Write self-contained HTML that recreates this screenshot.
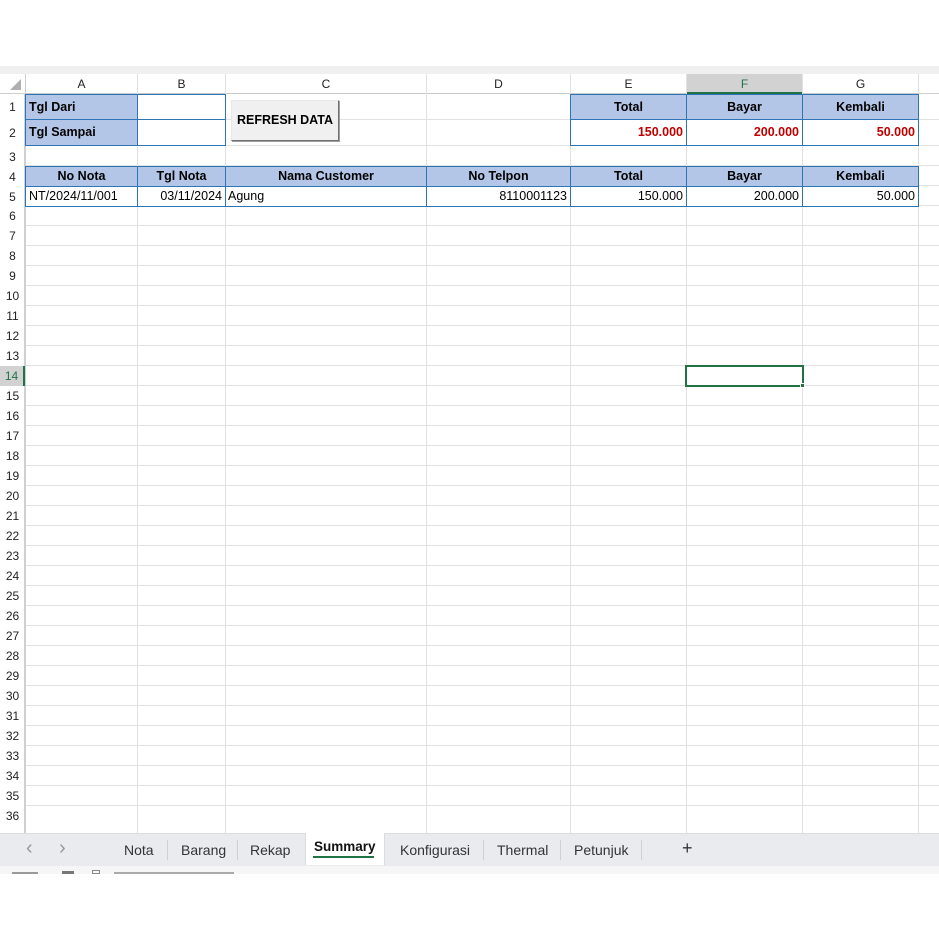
<!DOCTYPE html>
<html><head><meta charset="utf-8"><style>
*{margin:0;padding:0;box-sizing:border-box}
body{width:939px;height:939px;background:#fff;position:relative;overflow:hidden;font-family:"Liberation Sans",Arial,sans-serif;font-size:12.5px;color:#000}
.a{position:absolute}
.vl{position:absolute;top:74px;height:759px;width:1px;background:#e1e1e1}
.hdr{position:absolute;top:74px;height:20px;background:#fff;border-bottom:1px solid #c8c8c8;text-align:center;line-height:20px;color:#222;font-size:12px}
.rn{position:absolute;left:0;width:25px;text-align:center;color:#222;font-size:12px;line-height:20px}
.c{position:absolute;line-height:19px;white-space:nowrap;overflow:hidden;padding:0 3px}
.h{background:#b4c6e7;font-weight:bold;text-align:center;border:1px solid #2e75b6}
.b{border:1px solid #2e75b6}
.r{text-align:right}
.red{color:#c00000;font-weight:bold}
.tab{position:absolute;top:842px;font-size:14px;color:#333}
.sep{position:absolute;top:840px;width:1px;height:20px;background:#d0d0d0}
</style></head><body>
<div class="a" style="left:0;top:66px;width:939px;height:8px;background:#f0f0f0"></div>
<div class="a" style="left:0;top:74px;width:939px;height:20px;background:#fff;border-bottom:1px solid #d0d0d0"></div>
<div class="a" style="left:0;top:94px;width:25px;height:739px;background:#fff;border-right:1px solid #d0d0d0"></div>
<div class="a" style="left:26px;top:94px;width:913px;height:739px;background:repeating-linear-gradient(to bottom,#fff 0,#fff 19px,#e1e1e1 19px,#e1e1e1 20px);background-position:0 -8px"></div>
<div class="a" style="left:26px;top:94px;width:913px;height:72px;background:#fff"></div>
<div class="a" style="left:26px;top:119px;width:913px;height:1px;background:#e1e1e1"></div>
<div class="a" style="left:26px;top:145px;width:913px;height:1px;background:#e1e1e1"></div>
<div class="a" style="left:26px;top:165px;width:913px;height:1px;background:#e1e1e1"></div>
<div class="vl" style="left:25px;background:#d0d0d0"></div>
<div class="vl" style="left:137px"></div><div class="vl" style="left:225px"></div><div class="vl" style="left:426px"></div><div class="vl" style="left:570px"></div><div class="vl" style="left:686px"></div><div class="vl" style="left:802px"></div><div class="vl" style="left:918px"></div>
<svg class="a" style="left:8px;top:79px" width="14" height="12"><polygon points="13,0 13,11 2,11" fill="#b0b0b0"/></svg>
<div class="hdr" style="left:26px;width:111px">A</div>
<div class="hdr" style="left:138px;width:87px">B</div>
<div class="hdr" style="left:226px;width:200px">C</div>
<div class="hdr" style="left:427px;width:143px">D</div>
<div class="hdr" style="left:571px;width:115px">E</div>
<div class="hdr" style="left:687px;width:115px;background:#d2d2d2;border-bottom:2px solid #217346;color:#217346">F</div>
<div class="hdr" style="left:803px;width:115px">G</div>
<div class="rn" style="top:97px">1</div><div class="rn" style="top:123px">2</div><div class="rn" style="top:147px">3</div><div class="rn" style="top:167px">4</div><div class="rn" style="top:187px">5</div>
<div class="rn" style="top:206px">6</div><div class="rn" style="top:226px">7</div><div class="rn" style="top:246px">8</div><div class="rn" style="top:266px">9</div><div class="rn" style="top:286px">10</div><div class="rn" style="top:306px">11</div><div class="rn" style="top:326px">12</div><div class="rn" style="top:346px">13</div>
<div class="rn" style="top:366px;height:20px;background:#d2d2d2;color:#217346;border-right:2px solid #217346">14</div>
<div class="rn" style="top:386px">15</div><div class="rn" style="top:406px">16</div><div class="rn" style="top:426px">17</div><div class="rn" style="top:446px">18</div><div class="rn" style="top:466px">19</div><div class="rn" style="top:486px">20</div><div class="rn" style="top:506px">21</div><div class="rn" style="top:526px">22</div><div class="rn" style="top:546px">23</div><div class="rn" style="top:566px">24</div><div class="rn" style="top:586px">25</div><div class="rn" style="top:606px">26</div><div class="rn" style="top:626px">27</div><div class="rn" style="top:646px">28</div><div class="rn" style="top:666px">29</div><div class="rn" style="top:686px">30</div><div class="rn" style="top:706px">31</div><div class="rn" style="top:726px">32</div><div class="rn" style="top:746px">33</div><div class="rn" style="top:766px">34</div><div class="rn" style="top:786px">35</div><div class="rn" style="top:806px">36</div>
<div class="c h" style="left:25px;top:94px;width:113px;height:26px;line-height:24px;text-align:left">Tgl Dari</div>
<div class="c h" style="left:25px;top:119px;width:113px;height:27px;line-height:25px;text-align:left">Tgl Sampai</div>
<div class="c b" style="left:137px;top:94px;width:89px;height:26px"></div>
<div class="c b" style="left:137px;top:119px;width:89px;height:27px"></div>
<div class="a" style="left:231px;top:100px;width:108px;height:41px;background:#f0f0f0;border:1px solid;border-color:#e8e8e8 #707070 #707070 #e8e8e8;box-shadow:1px 1px 0 #a0a0a0;font-weight:bold;font-size:12.5px;text-align:center;line-height:39px">REFRESH DATA</div>
<div class="c h" style="left:570px;top:94px;width:117px;height:26px;line-height:24px">Total</div>
<div class="c h" style="left:686px;top:94px;width:117px;height:26px;line-height:24px">Bayar</div>
<div class="c h" style="left:802px;top:94px;width:117px;height:26px;line-height:24px">Kembali</div>
<div class="c b r red" style="left:570px;top:119px;width:117px;height:27px;line-height:25px">150.000</div>
<div class="c b r red" style="left:686px;top:119px;width:117px;height:27px;line-height:25px">200.000</div>
<div class="c b r red" style="left:802px;top:119px;width:117px;height:27px;line-height:25px">50.000</div>
<div class="c h" style="left:25px;top:166px;width:113px;height:21px">No Nota</div>
<div class="c h" style="left:137px;top:166px;width:89px;height:21px">Tgl Nota</div>
<div class="c h" style="left:225px;top:166px;width:202px;height:21px">Nama Customer</div>
<div class="c h" style="left:426px;top:166px;width:145px;height:21px">No Telpon</div>
<div class="c h" style="left:570px;top:166px;width:117px;height:21px">Total</div>
<div class="c h" style="left:686px;top:166px;width:117px;height:21px">Bayar</div>
<div class="c h" style="left:802px;top:166px;width:117px;height:21px">Kembali</div>
<div class="c b" style="left:25px;top:186px;width:113px;height:21px;background:#fff">NT/2024/11/001</div>
<div class="c b r" style="left:137px;top:186px;width:89px;height:21px;background:#fff">03/11/2024</div>
<div class="c b" style="left:225px;top:186px;width:202px;height:21px;background:#fff;padding-left:2px">Agung</div>
<div class="c b r" style="left:426px;top:186px;width:145px;height:21px;background:#fff">8110001123</div>
<div class="c b r" style="left:570px;top:186px;width:117px;height:21px;background:#fff">150.000</div>
<div class="c b r" style="left:686px;top:186px;width:117px;height:21px;background:#fff">200.000</div>
<div class="c b r" style="left:802px;top:186px;width:117px;height:21px;background:#fff">50.000</div>
<div class="a" style="left:685px;top:365px;width:119px;height:22px;border:2px solid #217346"></div>
<div class="a" style="left:800px;top:383px;width:5px;height:5px;background:#217346;border:1px solid #fff"></div>
<div class="a" style="left:0;top:833px;width:939px;height:33px;background:#e9ebee;border-top:1px solid #dcdcdc"></div>
<div class="a" style="left:305px;top:833px;width:80px;height:32px;background:#fff;border-left:1px solid #dcdcdc;border-right:1px solid #dcdcdc"></div>
<div class="tab" style="left:26px;top:837px;font-size:20px;color:#999">&#8249;</div>
<div class="tab" style="left:59px;top:837px;font-size:20px;color:#999">&#8250;</div>
<div class="tab" style="left:124px">Nota</div>
<div class="sep" style="left:167px"></div>
<div class="tab" style="left:181px">Barang</div>
<div class="sep" style="left:237px"></div>
<div class="tab" style="left:250px">Rekap</div>
<div class="tab" style="left:314px;top:839px;color:#111;font-weight:bold;font-size:13.5px">Summary</div>
<div class="a" style="left:313px;top:856px;width:61px;height:2px;background:#217346"></div>
<div class="tab" style="left:400px">Konfigurasi</div>
<div class="sep" style="left:483px"></div>
<div class="tab" style="left:497px">Thermal</div>
<div class="sep" style="left:560px"></div>
<div class="tab" style="left:574px">Petunjuk</div>
<div class="sep" style="left:641px"></div>
<div class="tab" style="left:682px;font-size:18px;top:838px">+</div>
<div class="a" style="left:0;top:866px;width:939px;height:8px;background:#f6f6f6"></div>
<div class="a" style="left:12px;top:872px;width:26px;height:2px;background:#999"></div>
<div class="a" style="left:62px;top:871px;width:12px;height:3px;background:#777"></div>
<div class="a" style="left:92px;top:870px;width:8px;height:4px;border:1px solid #888"></div>
<div class="a" style="left:114px;top:872px;width:120px;height:2px;background:#aaa"></div>
</body></html>
